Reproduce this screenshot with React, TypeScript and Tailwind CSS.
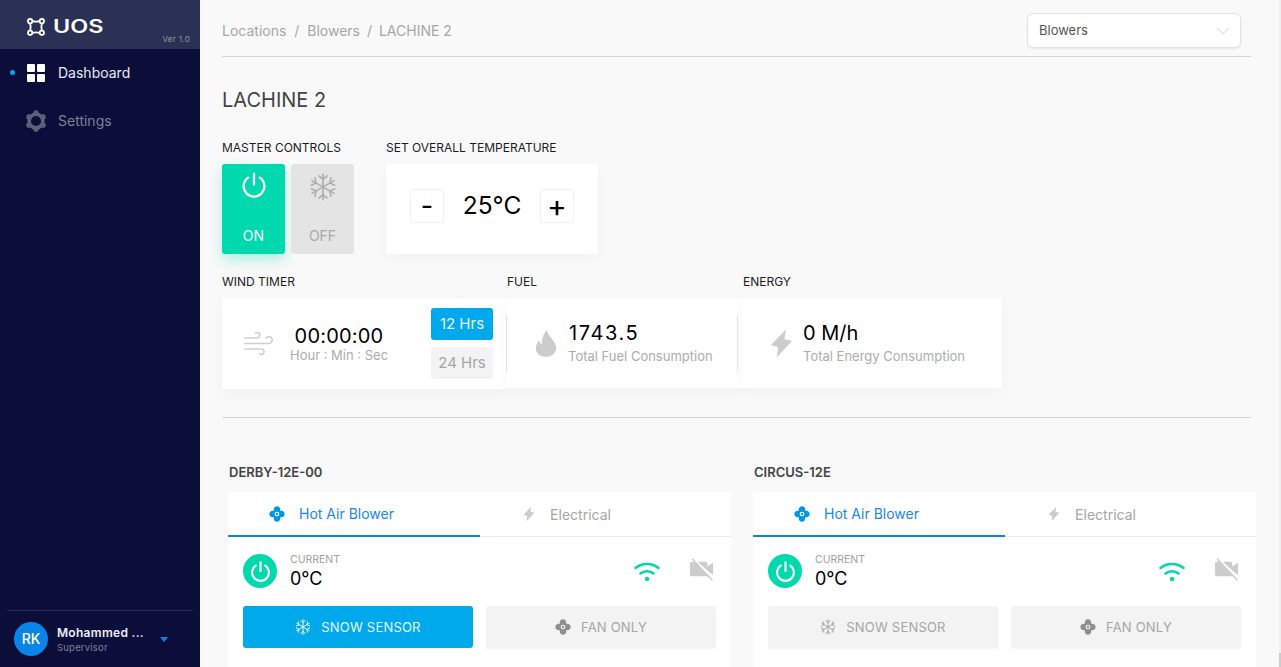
import React from 'react';
import { ChevronDown, Wind } from 'lucide-react';

const FONT = "font-['Inter','Noto_Sans',sans-serif]";

const Power = ({ className, strokeWidth = 2 }: { className?: string; strokeWidth?: number }) => (
  <svg viewBox="0 0 24 24" fill="none" stroke="currentColor" strokeWidth={strokeWidth} strokeLinecap="round" className={className}>
    <path d="M12 1.500v10" />
    <path d="M6.600 5.200a9.600 9.600 0 1 0 10.800 0" />
  </svg>
);

const Snow = ({ className, strokeWidth = 1.500 }: { className?: string; strokeWidth?: number }) => (
  <svg viewBox="0 0 24 24" fill="none" stroke="currentColor" strokeWidth={strokeWidth} strokeLinecap="round" strokeLinejoin="round" className={className}>
    <path d="M12 1v22M2.500 6.500l19 11M21.500 6.500l-19 11" />
    <path d="M8.500 2.500L12 5.500l3.500-3M8.500 21.500l3.500-3 3.500 3" />
    <path d="M2 10.500l4-2-.8-4.400M22 13.500l-4 2 .8 4.400M22 10.500l-4-2 .8-4.400M2 13.500l4 2-.8 4.400" />
  </svg>
);

const Fan = ({ className }: { className?: string }) => (
  <svg viewBox="0 0 24 24" className={className} fill="currentColor">
    <path fillRule="evenodd" d="M12 0.500c3.200 0 5.200 2.200 4.800 6.700 4.400-.5 6.700 1.600 6.700 4.800s-2.300 5.300-6.700 4.800c.4 4.500-1.600 6.700-4.800 6.700s-5.200-2.200-4.800-6.700C2.800 17.300.5 15.200.5 12s2.300-5.300 6.700-4.800C6.800 2.700 8.800.5 12 .5zM12 8.500a3.500 3.500 0 1 0 0 7 3.500 3.500 0 0 0 0-7z" />
    <circle cx="12" cy="12" r="1.700" />
  </svg>
);

const Bolt = ({ className }: { className?: string }) => (
  <svg viewBox="0 0 24 30" className={className} fill="currentColor">
    <path d="M16.500 0.500L1 16.500l7.500 2.500L7 29.500 23 12.500l-8-2z" />
  </svg>
);

const Flame = ({ className }: { className?: string }) => (
  <svg viewBox="0 0 24 30" className={className} fill="currentColor">
    <path d="M12.500 0.500c1.500 4.500 4.500 7 7.500 11.500 2.500 3.800 3.500 6.500 3 9.500-.8 4.800-5.500 8-11 8S1.500 26.500 1 21.500C.6 17.500 2.500 14 4.500 11.500c.4 2 1.200 3.500 3 4.500C7 10.500 9 5 12.500.5z" />
  </svg>
);

const CamOff = ({ className }: { className?: string }) => (
  <svg viewBox="0 0 26 24" className={className}>
    <path fill="currentColor" d="M1 5.500C1 4.200 2 3.500 3 3.500h2.500L20 18.500H3c-1.200 0-2-.9-2-2zM9 3.500h8c1.300 0 2 .8 2 2v2.800l6-3.800v12.500l-3-1.800z" />
    <path stroke="currentColor" strokeWidth={1.500} strokeLinecap="round" d="M3.500 0.500l20.500 22" />
  </svg>
);

const Gear = ({ className }: { className?: string }) => (
  <svg viewBox="0 0 24 24" className={className} fill="currentColor">
    <circle cx="12" cy="12" r="7.500" fill="none" stroke="currentColor" strokeWidth={4} />
    <circle cx="12" cy="3" r="2.800" />
    <circle cx="12" cy="21" r="2.800" />
    <circle cx="4.200" cy="7.500" r="2.800" />
    <circle cx="19.800" cy="7.500" r="2.800" />
    <circle cx="4.200" cy="16.500" r="2.800" />
    <circle cx="19.800" cy="16.500" r="2.800" />
  </svg>
);

const SectionLabel = ({ children, className = '' }: { children: React.ReactNode; className?: string }) => (
  <div className={`text-xs font-normal leading-[14px] text-[#1c1c1c] ${className}`}>{children}</div>
);

const ActionButton = ({ icon, label, active }: { icon: React.ReactNode; label: string; active?: boolean }) => (
  <div
    className={`flex h-[42px] flex-1 items-center justify-center gap-[10px] rounded-[3px] text-[13px] tracking-[0.2px] ${
      active ? 'bg-[#00a8ec] text-[#eaf6fd]' : 'bg-[#f3f3f3] text-[#a6a6a6] shadow-[0_2px_2px_rgba(0,0,0,0.03)]'
    }`}
  >
    {icon}
    <span className="pt-[1px]">{label}</span>
  </div>
);

const BlowerCard = ({ name, snowActive }: { name: string; snowActive?: boolean }) => (
  <div className="w-[503px] shrink-0">
    <div className="mb-[13px] pl-[1px] text-[13px] font-semibold leading-[14px] text-[#444444]">{name}</div>
    <div className="h-[200px] bg-white">
      <div className="flex h-[45px]">
        <div className="flex w-[252px] shrink-0 items-center justify-center gap-[14px] border-b-2 border-[#0a84e8] pr-[45px] text-sm text-[#1a86ea]">
          <Fan className="h-4 w-4 text-[#0096e6]" />
          <span className="pt-[1px]">Hot Air Blower</span>
        </div>
        <div className="flex w-[251px] shrink-0 items-center justify-center gap-[15px] border-b border-[#ececec] pr-[77px] text-sm text-[#a6a6a6]">
          <Bolt className="h-4 w-3 text-[#cccccc]" />
          <span className="pt-[1px]">Electrical</span>
        </div>
      </div>
      <div className="flex h-[69px] items-center px-[15px] pb-[1px]">
        <div className="flex h-[34px] w-[34px] items-center justify-center rounded-full bg-[#00d8ae] text-white">
          <Power className="h-[21px] w-[21px]" strokeWidth={2.400} />
        </div>
        <div className="ml-[13px] flex-1">
          <div className="text-[10.500px] leading-[12px] text-[#a0a0a0]">CURRENT</div>
          <div className="mt-[3px] text-lg leading-[20px] text-black">0°C</div>
        </div>
        <svg viewBox="0 0 26 20" fill="none" className="mr-[29px] mt-[-1px] h-5 w-[26px] text-[#00d8ae]">
          <path d="M1.500 7C7.500 1.500 18.500 1.500 24.500 7" stroke="currentColor" strokeWidth={2.500} strokeLinecap="round" />
          <path d="M6.500 12.500c3.500-3 9.500-3 13 0" stroke="currentColor" strokeWidth={2.500} strokeLinecap="round" />
          <circle cx="13" cy="18" r="2.200" fill="currentColor" />
        </svg>
        <CamOff className="mr-[2px] mt-[-3px] h-[24px] w-[25px] text-[#cccccc]" />
      </div>
      <div className="flex gap-[13px] px-[15px]">
        <ActionButton active={snowActive} label="SNOW SENSOR" icon={<Snow className="h-4 w-4" />} />
        <ActionButton label="FAN ONLY" icon={<Fan className="h-4 w-4 text-[#8f8f8f]" />} />
      </div>
    </div>
  </div>
);

export default function App() {
  return (
    <div className={`flex h-[667px] w-full overflow-hidden bg-[#f9f9f9] ${FONT}`}>
      <aside className="flex w-[200px] shrink-0 flex-col bg-[#0b0e38]">
        <div className="relative flex h-[49px] items-center bg-[#2a3154] pl-[27px] pt-[5px]">
          <svg viewBox="0 0 20 20" fill="none" stroke="white" strokeWidth={2} className="h-[18px] w-[18px]">
            <circle cx="3.500" cy="3.500" r="2.400" />
            <circle cx="16.500" cy="3.500" r="2.400" />
            <circle cx="3.500" cy="16.500" r="2.400" />
            <circle cx="16.500" cy="16.500" r="2.400" />
            <path d="M6 3.500c2.500.7 5.500.7 8 0M6 16.500c2.500-.7 5.500-.7 8 0M3.500 6c.7 2.500.7 5.500 0 8M16.500 6c-.7 2.500-.7 5.500 0 8" />
          </svg>
          <span className="ml-[8px] origin-left text-lg font-semibold leading-none text-white [transform:scaleX(1.300)]">UOS</span>
          <span className="absolute bottom-[5px] right-[10px] text-[8px] leading-[10px] tracking-[0.3px] text-[#9297a8]">Ver 1.0</span>
        </div>
        <nav className="flex flex-col">
          <div className="relative flex h-[48px] items-center pl-[27px] text-sm text-[#e8eaf5]">
            <span className="absolute left-[10px] top-[21px] h-[5px] w-[5px] rounded-full bg-[#00a8ec]" />
            <div className="grid h-[18px] w-[18px] grid-cols-2 gap-[2px]">
              <span className="rounded-[1px] bg-white" />
              <span className="rounded-[1px] bg-white" />
              <span className="rounded-[1px] bg-white" />
              <span className="rounded-[1px] bg-white" />
            </div>
            <span className="ml-[13px]">Dashboard</span>
          </div>
          <div className="flex h-[48px] items-center pl-[25px] text-sm text-[#7d8199]">
            <Gear className="h-[22px] w-[22px] text-[#5d6079]" />
            <span className="ml-[11px]">Settings</span>
          </div>
        </nav>
        <div className="mx-[7px] mt-auto flex h-[57px] items-center border-t border-[#2c3056] pl-[7px]">
          <div className="flex h-[34px] w-[34px] items-center justify-center rounded-full bg-[#0a84e8] text-sm font-medium text-white">RK</div>
          <div className="ml-[9px] w-[90px]">
            <div className="text-xs font-semibold leading-[15px] tracking-[0.3px] text-[#eef0fb]">Mohammed ...</div>
            <div className="mt-[1px] text-[9.500px] leading-[13px] tracking-[0.2px] text-[#7d8199]">Supervisor</div>
          </div>
          <span className="ml-[13px] h-0 w-0 border-x-[4.500px] border-t-[5px] border-x-transparent border-t-[#0a84e8]" />
        </div>
      </aside>

      <main className="min-w-0 flex-1 pl-[22px] pr-[28px]">
        <header className="flex h-[57px] items-center justify-between border-b border-[#d4d4d4] pt-[5px]">
          <div className="text-sm text-[#a6a6a6]">
            Locations <span className="mx-[4px]">/</span> Blowers <span className="mx-[3px]">/</span> LACHINE 2
          </div>
          <div className="mr-[10px] flex h-[35px] w-[214px] items-center justify-between rounded-[6px] border border-[#e2e2e2] bg-white pl-[11px] pr-[6px] text-[13px] text-[#555555] shadow-[0_1px_2px_rgba(0,0,0,0.08)]">
            <span className="pt-[1px]">Blowers</span>
            <ChevronDown className="h-[22px] w-[22px] text-[#c4c4c4]" strokeWidth={0.900} />
          </div>
        </header>

        <h1 className="mt-[32px] text-xl font-normal leading-[22px] text-[#444444]">LACHINE 2</h1>

        <div className="mt-[30px] flex">
          <div className="w-[164px]">
            <SectionLabel>MASTER CONTROLS</SectionLabel>
            <div className="mt-[9px] flex gap-[6px]">
              <div className="flex h-[90px] w-[63px] flex-col items-center rounded-[3px] bg-[#00d8ae] pb-[8px] pt-[8px] text-white shadow-[0_6px_14px_rgba(0,216,174,0.3)]">
                <Power className="h-[26px] w-[26px]" strokeWidth={2.100} />
                <span className="mt-auto text-sm leading-[20px]">ON</span>
              </div>
              <div className="flex h-[90px] w-[63px] flex-col items-center rounded-[3px] bg-[#e4e4e4] pb-[8px] pt-[9px] text-[#a9a9a9]">
                <Snow className="h-[28px] w-[28px] text-[#aeaeae]" strokeWidth={1.400} />
                <span className="mt-auto text-sm leading-[20px]">OFF</span>
              </div>
            </div>
          </div>
          <div>
            <SectionLabel>SET OVERALL TEMPERATURE</SectionLabel>
            <div className="mt-[9px] flex h-[90px] w-[212px] items-center justify-center gap-[18px] bg-white pb-[7px] shadow-[0_4px_12px_rgba(0,0,0,0.03)]">
              <div className="flex h-[34px] w-[34px] items-center justify-center rounded-[3px] border border-[#f0f0f0] text-[27px] leading-none text-black">-</div>
              <div className="w-[60px] whitespace-nowrap text-center text-[24.500px] leading-none text-black">25°C</div>
              <div className="flex h-[34px] w-[34px] items-center justify-center rounded-[3px] border border-[#f0f0f0] text-[30px] leading-none text-black">+</div>
            </div>
          </div>
        </div>

        <div className="mt-[21px] flex items-start">
          <div className="w-[285px]">
            <SectionLabel>WIND TIMER</SectionLabel>
            <div className="mt-[9px] flex h-[91px] items-center bg-white pl-[20px] shadow-[0_4px_14px_rgba(0,0,0,0.04)]">
              <Wind className="h-[33px] w-[33px] shrink-0 text-[#cfcfcf]" strokeWidth={1.200} />
              <div className="ml-[15px] w-[98px] whitespace-nowrap pb-[2px] text-center">
                <div className="text-xl leading-[24px] tracking-[0.2px] text-black">00:00:00</div>
                <div className="text-[13px] leading-[14px] text-[#acacac]">Hour : Min : Sec</div>
              </div>
              <div className="ml-auto flex w-[62px] flex-col gap-[7px]">
                <div className="flex h-[32px] items-center justify-center rounded-[3px] bg-[#00a8ec] text-[15px] text-[#eaf6fd]">12 Hrs</div>
                <div className="flex h-[32px] items-center justify-center rounded-[3px] bg-[#f3f3f3] text-[15px] text-[#a6a6a6]">24 Hrs</div>
              </div>
              <span className="ml-[13px] h-[57px] w-px bg-[#e8e8e8]" />
            </div>
          </div>
          <div className="w-[235px]">
            <SectionLabel>FUEL</SectionLabel>
            <div className="mt-[9px] flex h-[90px] items-center bg-white shadow-[0_4px_14px_rgba(0,0,0,0.04)]">
              <div className="flex h-[57px] w-[231px] items-center border-r border-[#e8e8e8] pl-[28px]">
                <Flame className="h-[29px] w-[22px] text-[#cccccc]" />
                <div className="ml-[11px] pb-[2px]">
                  <div className="pl-[1px] text-xl leading-[24px] tracking-[1.600px] text-black">1743.5</div>
                  <div className="mt-[3px] text-[13px] leading-[16px] text-[#acacac]">Total Fuel Consumption</div>
                </div>
              </div>
            </div>
          </div>
          <div className="w-[260px]">
            <SectionLabel className="pl-[1px]">ENERGY</SectionLabel>
            <div className="mt-[9px] flex h-[90px] items-center bg-white pl-[28px] shadow-[0_4px_14px_rgba(0,0,0,0.04)]">
              <Bolt className="h-[31px] w-[23px] text-[#cccccc]" />
              <div className="ml-[10px] pb-[2px]">
                <div className="text-xl leading-[24px] text-black">0 M/h</div>
                <div className="mt-[3px] text-[13px] leading-[16px] text-[#acacac]">Total Energy Consumption</div>
              </div>
            </div>
          </div>
        </div>

        <div className="mt-[28px] border-t border-[#d4d4d4]" />

        <div className="ml-[6px] mt-[47px] flex gap-[22px]">
          <BlowerCard name="DERBY-12E-00" snowActive />
          <BlowerCard name="CIRCUS-12E" />
        </div>
      </main>

      <div className="flex w-[2px] shrink-0 flex-col justify-end bg-[#f0f0f0]">
        <div className="h-[14px] bg-[#cccccc]" />
      </div>
    </div>
  );
}
